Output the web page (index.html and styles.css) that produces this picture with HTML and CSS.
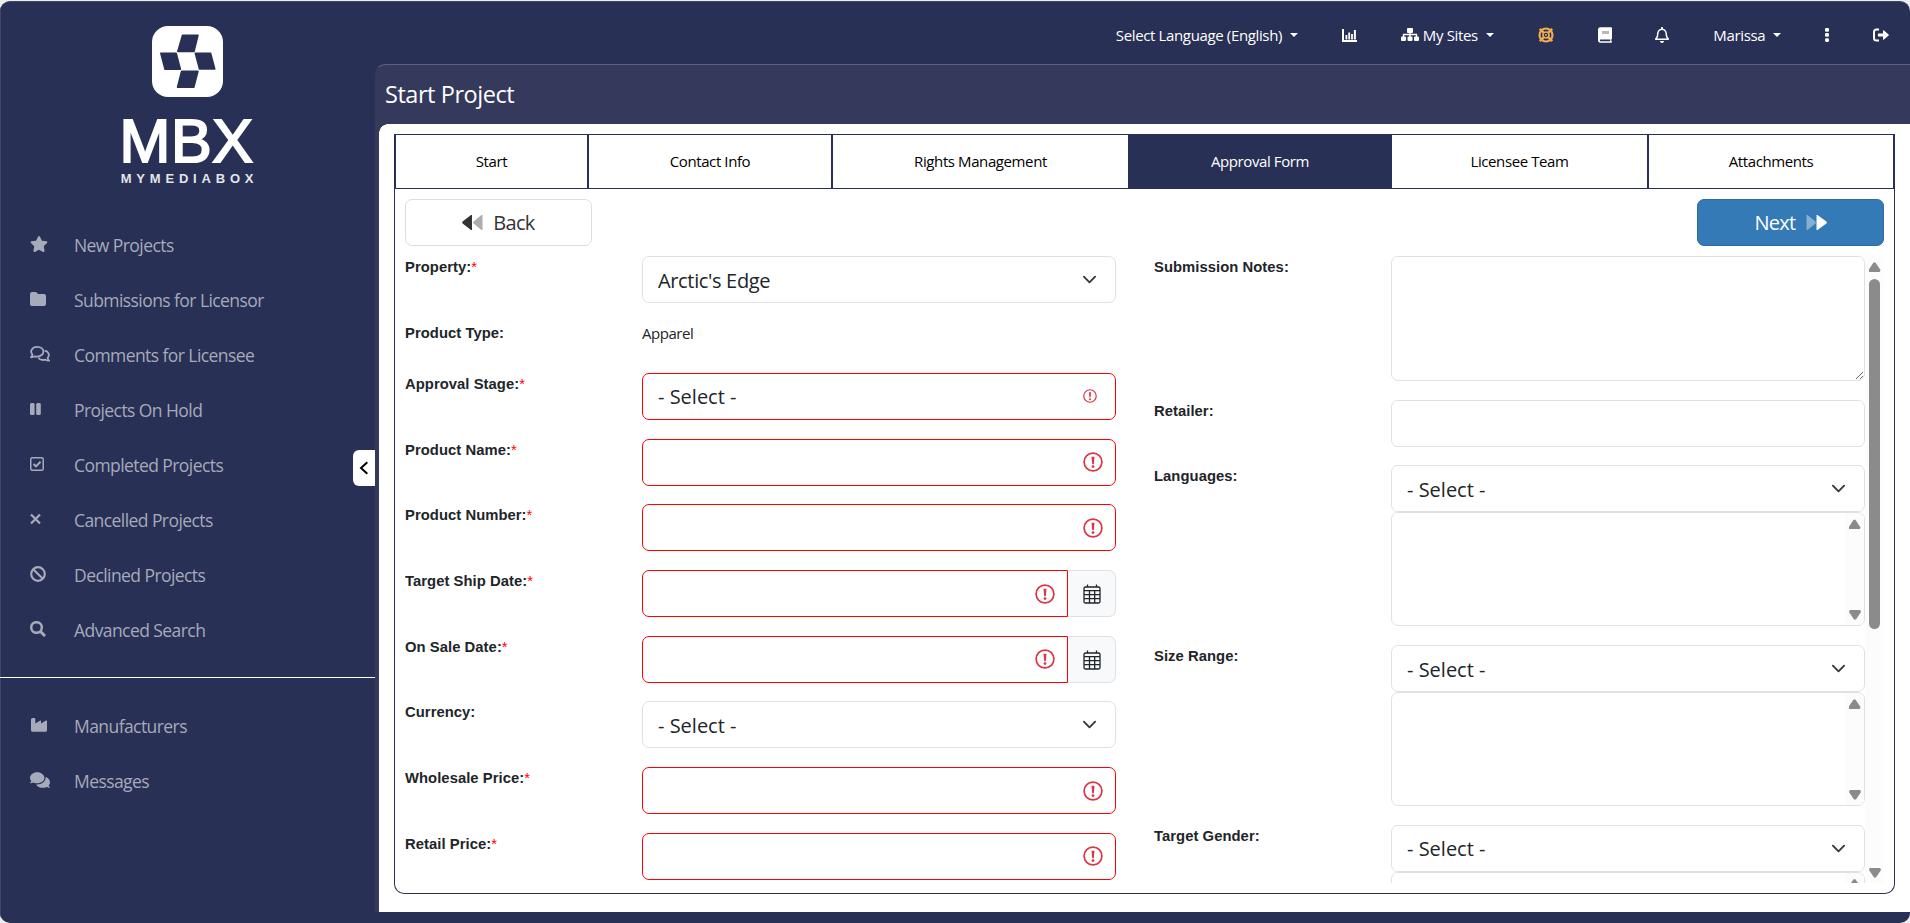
FILE: index.html
```html
<!DOCTYPE html>
<html lang="en">
<head>
    <meta charset="utf-8">
    <title>Start Project - MyMediaBox</title>
    <link rel="stylesheet" href="styles.css">
</head>
<body>
<div class="app">

    <div class="sidebar">
        <div class="logo">
            <svg class="logo-mark" viewBox="0 0 71 71">
                <rect width="71" height="71" rx="16" fill="#fff"/>
                <g fill="#293055" stroke="#293055" stroke-width="1.5" stroke-linejoin="round">
                    <path d="M30.5 9.2H46L42 25.5H25.8z"/>
                    <path d="M8.8 27.3H24.2L28.4 43.3H13z"/>
                    <path d="M43.3 27.3H58.6L62.8 43H47.5z"/>
                    <path d="M29.6 45.2H46L41.8 61.2H25.5z"/>
                </g>
            </svg>
            <div class="logo-name">MBX</div>
            <div class="logo-sub">MYMEDIABOX</div>
        </div>
        <ul class="menu">
            <li><svg width="18" height="16" viewBox="0 0 576 512"><path d="M259.3 17.8L194 150.2 47.9 171.5c-26.2 3.8-36.7 36.1-17.7 54.6l105.7 103-25 145.5c-4.5 26.3 23.2 46 46.4 33.7L288 439.6l130.7 68.7c23.2 12.2 50.9-7.4 46.4-33.7l-25-145.5 105.7-103c19-18.5 8.5-50.8-17.7-54.6L382 150.2 316.7 17.8c-11.7-23.6-45.6-23.9-57.4 0z"/></svg><span>New Projects</span></li>
            <li><svg width="16" height="16" viewBox="0 0 16 16"><path d="M2 1h4l2 2h6q2 0 2 2v8q0 2-2 2H2q-2 0-2-2V3q0-2 2-2z"/></svg><span>Submissions for Licensor</span></li>
            <li><svg width="20" height="16" viewBox="0 0 20 16"><g fill="none" stroke="#a6aaba" stroke-width="1.8" stroke-linejoin="round"><path d="M2.4 8.6C-.6 5 2.4.9 7 .9s6.4 2.6 6.4 4.9S11 10.600 7 10.600q-1.200 0-2.200-.3Q3.200 11.300 1 11.300 2.200 10 2.400 8.600z"/><path d="M14.600 4.600c3.800.6 5.600 4.400 3 7.400q.2 1.600 1.600 2.700-2.400 0-3.900-1-4.800 1.200-6.900-2"/></g></svg><span>Comments for Licensee</span></li>
            <li><svg width="11" height="16" viewBox="0 0 11 16"><rect y="2" width="4.600" height="12" rx="1.500"/><rect x="6.200" y="2" width="4.600" height="12" rx="1.500"/></svg><span>Projects On Hold</span></li>
            <li><svg width="14" height="16" viewBox="0 0 14 16"><g fill="none" stroke="#a6aaba" stroke-width="1.500"><rect x=".8" y="1.800" width="12.400" height="12.400" rx="1.500"/><path stroke-width="2" d="M3.600 8l2.400 2.400 4.500-4.700"/></g></svg><span>Completed Projects</span></li>
            <li><svg width="11" height="16" viewBox="0 0 11 16"><path fill="none" stroke="#a6aaba" stroke-width="2.300" d="M1 3.500l9 9M10 3.500l-9 9"/></svg><span>Cancelled Projects</span></li>
            <li><svg width="16" height="16" viewBox="0 0 16 16"><g fill="none" stroke="#a6aaba" stroke-width="2.200"><circle cx="8" cy="8" r="6.800"/><path d="M3.200 3.200l9.600 9.600"/></g></svg><span>Declined Projects</span></li>
            <li><svg width="16" height="16" viewBox="0 0 16 16"><g fill="none" stroke="#a6aaba"><circle cx="6.500" cy="6.500" r="5.300" stroke-width="2.500"/><path stroke-width="3" d="M10.300 10.300l4.700 4.700"/></g></svg><span>Advanced Search</span></li>
        </ul>
        <ul class="menu menu-bottom">
            <li><svg width="18" height="16" viewBox="0 0 18 16"><path d="M1 2.500Q1 1 2.500 1h1.800Q5.300 1 5.300 2v4.500l5-2.900q.7-.3.700.5v2.400l5-2.900q1-.4 1 .6v9q0 1.500-1.500 1.500h-13Q1 14.700 1 13.200z"/></svg><span>Manufacturers</span></li>
            <li><svg width="20" height="18" viewBox="0 0 576 512"><path d="M416 192c0-88.400-93.100-160-208-160S0 103.600 0 192c0 34.300 14.100 65.900 38 92-13.400 30.200-35.500 54.200-35.800 54.500-2.200 2.300-2.800 5.700-1.500 8.700S4.800 352 8 352c36.600 0 66.900-12.300 88.700-25 32.200 15.700 70.300 25 111.300 25 114.900 0 208-71.600 208-160zm122 220c23.900-26 38-57.700 38-92 0-66.900-53.500-124.200-129.300-148.100.9 6.600 1.300 13.300 1.300 20.100 0 105.900-107.700 192-240 192-10.800 0-21.300-.8-31.700-1.900C207.800 439.600 281.800 480 368 480c41 0 79.100-9.200 111.300-25 21.800 12.700 52.100 25 88.700 25 3.200 0 6.100-1.900 7.300-4.800 1.300-2.900.7-6.300-1.500-8.700-.3-.3-22.400-24.200-35.800-54.500z"/></svg><span>Messages</span></li>
        </ul>
        <div class="collapse">
            <svg width="10" height="14" viewBox="0 0 10 14"><path d="M8.300 1.200L2 7l6.300 5.800" fill="none" stroke="#000" stroke-width="2"/></svg>
        </div>
    </div>

    <div class="main">
        <div class="topbar">
            <div class="top-item">Select Language (English)<i class="caret"></i></div>
            <svg width="15" height="15" viewBox="0 0 15 15"><path d="M1 1v12h14" fill="none" stroke="#fff" stroke-width="2"/><path d="M3.500 7h1.800v4.500H3.500zM6.300 4.500h1.800v7H6.300zM9.100 6h1.800v5.500H9.100zM11.900 2h2v9.500h-2z" fill="#fff"/></svg>
            <div class="top-item sites"><svg width="18" height="15" viewBox="0 0 18 15" fill="#fff"><rect x="6" y="1" width="6" height="5" rx="1"/><rect y="9.500" width="5" height="4.500" rx="1"/><rect x="6.500" y="9.500" width="5" height="4.500" rx="1"/><rect x="13" y="9.500" width="5" height="4.500" rx="1"/><path d="M2.500 10V7.500h13V10M9 5v5" fill="none" stroke="#fff" stroke-width="1.400"/></svg>My Sites<i class="caret"></i></div>
            <svg width="16" height="16" viewBox="0 0 16 16"><g fill="none" stroke="#f0ad4e"><circle cx="8" cy="8" r="6.500" stroke-width="2.200"/><circle cx="8" cy="8" r="3" stroke-width="1.700"/><path stroke-width="2.600" d="M1.800 1.800l3.600 3.600M14.200 1.800l-3.600 3.600M1.800 14.200l3.600-3.600M14.200 14.200l-3.600-3.600"/></g><circle cx="8" cy="8" r="1" fill="#f0ad4e"/></svg>
            <svg width="14" height="16" viewBox="0 0 14 16"><path d="M2.500.3H13q1 0 1 1v10q0 .7-.6 1-.3 1 0 2 .6.200.6.700 0 .7-.8.700H2.500Q0 15.700 0 13V2.800Q0 .3 2.500.3z" fill="#fff"/><path d="M4 4h7v3H4z" fill="#b6b6cb"/><path d="M2.600 12.600h9.600v1.600H2.600q-.8 0-.8-.8t.8-.8z" fill="#293055"/></svg>
            <svg width="14" height="16" viewBox="0 0 448 512"><path fill="#fff" d="M439.390 362.290c-19.320-20.760-55.470-51.990-55.470-154.290 0-77.700-54.480-139.900-127.940-155.160V32c0-17.670-14.320-32-31.980-32s-31.980 14.330-31.980 32v20.840C118.560 68.100 64.080 130.300 64.080 208c0 102.300-36.150 133.530-55.470 154.290-6 6.450-8.660 14.160-8.610 21.710.11 16.400 12.980 32 32.100 32h383.800c19.120 0 32-15.600 32.100-32 .05-7.550-2.610-15.270-8.610-21.710zM67.530 368c21.220-27.970 44.420-74.330 44.530-159.420 0-.2-.06-.38-.06-.58 0-61.860 50.140-112 112-112s112 50.140 112 112c0 .2-.06.38-.06.58.11 85.100 23.310 131.460 44.530 159.420H67.530zM224 512c35.320 0 63.970-28.650 63.970-64H160.030c0 35.350 28.650 64 63.970 64z"/></svg>
            <div class="top-item">Marissa<i class="caret"></i></div>
            <svg width="4" height="14" viewBox="0 0 4 14" fill="#fff"><rect width="4" height="3.700" rx="1.300"/><rect y="5.100" width="4" height="3.700" rx="1.300"/><rect y="10.200" width="4" height="3.700" rx="1.300"/></svg>
            <svg width="16" height="16" viewBox="0 0 16 16"><path d="M6 2.500H3.500Q1 2.500 1 5v6q0 2.500 2.500 2.500H6" fill="none" stroke="#fff" stroke-width="2"/><path d="M5.500 6.500H10V4q0-1.300 1-.4l4.600 3.900q.5.500 0 1L11 12.400q-1 .9-1-.4V9.500H5.500q-.6 0-.6-.6V7.100q0-.6.600-.6z" fill="#fff"/></svg>
        </div>
        <div class="title-bar">Start Project</div>

        <div class="content">
            <div class="panel">
                <div class="tabs">
                    <div class="tab tab-start">Start</div>
                    <div class="tab tab-contact">Contact Info</div>
                    <div class="tab tab-rights">Rights Management</div>
                    <div class="tab tab-approval active">Approval Form</div>
                    <div class="tab tab-team">Licensee Team</div>
                    <div class="tab tab-attach">Attachments</div>
                </div>
                <div class="panel-body">
                    <div class="buttons">
                        <button class="btn btn-back"><svg width="21" height="15" viewBox="0 0 21 15"><path d="M10 0v15q-.7.300-1.300-.2L.6 8.400q-.8-.9 0-1.800L8.700.2Q9.300-.3 10 0z" fill="#333"/><path d="M20.500 0v15q-.7.300-1.300-.2l-7.600-6.400q-.8-.9 0-1.800L19.200.2q.6-.5 1.300-.2z" fill="#adadad"/></svg>Back</button>
                        <button class="btn btn-next">Next<svg width="21" height="15" viewBox="0 0 21 15"><path d="M.5 0v15q.7.300 1.300-.2l7.600-6.400q.8-.9 0-1.800L1.800.2Q1.200-.3.5 0z" fill="#85afd4"/><path d="M10.500 0v15q.7.300 1.300-.2l8.600-6.400q.8-.9 0-1.800L11.800.2q-.6-.5-1.300-.2z" fill="#fff"/></svg></button>
                    </div>
                    <div class="scroll-area">
                        <div class="form">
                            <div class="col">
                                <div class="row"><label>Property:<em>*</em></label><select class="field property"><option>Arctic's Edge</option></select></div>
                                <div class="row row-text"><label>Product Type:</label><div class="plain">Apparel</div></div>
                                <div class="row"><label>Approval Stage:<em>*</em></label><select class="field invalid"><option>- Select -</option></select></div>
                                <div class="row"><label>Product Name:<em>*</em></label><input type="text" class="field invalid"></div>
                                <div class="row"><label>Product Number:<em>*</em></label><input type="text" class="field invalid"></div>
                                <div class="row"><label>Target Ship Date:<em>*</em></label><div class="date"><input type="text" class="field invalid"><span class="cal"><svg width="18" height="20" viewBox="0 0 18 20"><path d="M2.500 3h13q1.500 0 1.500 1.500v13q0 1.500-1.500 1.500h-13Q1 19 1 17.500v-13Q1 3 2.500 3zM4.500.5V3M13.500.5V3M1 6.700h16M1 10.700h16M1 14.700h16M6.500 6.700V19M11.700 6.700V19" fill="none" stroke="#212529" stroke-width="1.300"/></svg></span></div></div>
                                <div class="row"><label>On Sale Date:<em>*</em></label><div class="date"><input type="text" class="field invalid"><span class="cal"><svg width="18" height="20" viewBox="0 0 18 20"><path d="M2.500 3h13q1.500 0 1.500 1.500v13q0 1.500-1.500 1.500h-13Q1 19 1 17.500v-13Q1 3 2.500 3zM4.500.5V3M13.500.5V3M1 6.700h16M1 10.700h16M1 14.700h16M6.500 6.700V19M11.700 6.700V19" fill="none" stroke="#212529" stroke-width="1.300"/></svg></span></div></div>
                                <div class="row"><label>Currency:</label><select class="field"><option>- Select -</option></select></div>
                                <div class="row"><label>Wholesale Price:<em>*</em></label><input type="text" class="field invalid"></div>
                                <div class="row"><label>Retail Price:<em>*</em></label><input type="text" class="field invalid"></div>
                            </div>
                            <div class="col">
                                <div class="row"><label>Submission Notes:</label><textarea class="field notes"></textarea></div>
                                <div class="row"><label>Retailer:</label><input type="text" class="field"></div>
                                <div class="row"><label>Languages:</label>
                                    <div class="multi"><select class="field"><option>- Select -</option></select><div class="list"><div class="bar"><i class="up"></i><i class="down"></i></div></div></div>
                                </div>
                                <div class="row"><label>Size Range:</label>
                                    <div class="multi"><select class="field"><option>- Select -</option></select><div class="list"><div class="bar"><i class="up"></i><i class="down"></i></div></div></div>
                                </div>
                                <div class="row"><label>Target Gender:</label>
                                    <div class="multi"><select class="field"><option>- Select -</option></select><div class="list"><div class="bar"><i class="up"></i><i class="down"></i></div></div></div>
                                </div>
                            </div>
                        </div>
                        <div class="bar main-bar"><i class="up"></i><div class="thumb"></div><i class="down"></i></div>
                    </div>
                </div>
            </div>
        </div>
    </div>

</div>
</body>
</html>
```

FILE: styles.css
```css
* {
    box-sizing: border-box;
}
body {
    margin: 0;
    padding-top: 1px;
    height: 923px;
    overflow: hidden;
    background: #eceeec;
    font-family: "Segoe UI", "Open Sans", "Noto Sans", sans-serif;
    color: #212529;
}
svg {
    display: block;
    flex: none;
}
.app {
    display: flex;
    height: 922px;
    background: #293055;
    border-radius: 10px;
    border-top: 1px solid #3f4667;
    overflow: hidden;
}

/* sidebar */
.sidebar {
    position: relative;
    width: 375px;
    border-left: 1px solid #3f4667;
    flex: none;
}
.logo {
    height: 215px;
    padding: 24px 2px 0 0;
    display: flex;
    flex-direction: column;
    align-items: center;
    color: #fff;
    font-family: "Liberation Sans", Arial, sans-serif;
}
.logo-mark {
    width: 71px;
    height: 71px;
}
.logo-name {
    margin-top: 14px;
    padding-right: 1px;
    font-size: 61px;
    line-height: 60px;
    letter-spacing: 0.6px;
    -webkit-text-stroke: 2px #fff;
}
.logo-sub {
    margin-top: 1px;
    padding-left: 5px;
    font-size: 13px;
    line-height: 14px;
    font-weight: bold;
    letter-spacing: 4.8px;
    color: #e3e4ea;
}
.menu {
    list-style: none;
    margin: 0;
    padding: 0 0 20px;
}
.menu li {
    display: flex;
    align-items: center;
    height: 55px;
    padding-left: 28.5px;
    font-size: 17.5px;
    letter-spacing: -0.57px;
    color: #a6aaba;
    fill: #a6aaba;
}
.menu li svg {
    margin-top: -2px;
}
.menu li span {
    position: absolute;
    left: 73px;
}
.menu-bottom {
    margin-left: -1px;
    border-top: 1px solid #fff;
    padding: 20px 0 0 1px;
}
.collapse {
    position: absolute;
    right: 0;
    top: 448px;
    width: 22px;
    height: 36px;
    padding: 11px 0 0 6px;
    background: #fff;
    border-radius: 6px 0 0 6px;
}

/* header */
.main {
    flex: 1;
    display: flex;
    flex-direction: column;
}
.topbar {
    height: 62px;
    display: flex;
    align-items: center;
    justify-content: flex-end;
    gap: 43.9px;
    padding: 4px 21px 0 0;
    color: #fff;
    font-size: 15px;
    letter-spacing: -0.36px;
}
.top-item {
    display: flex;
    align-items: center;
    height: 22px;
    margin-top: -1px;
}
.sites svg {
    margin-right: 4px;
}
.caret {
    margin-left: 8px;
    border: 4px solid transparent;
    border-top-color: #fff;
    border-bottom: 0;
}
.title-bar {
    height: 70px;
    margin-bottom: -10px;
    padding: 12px 0 0 9px;
    background: #353a5d;
    border-top: 1px solid #5c617e;
    border-left: 1px solid #353a5d;
    border-radius: 10px 0 0 0;
    color: #fff;
    font-size: 23.5px;
    line-height: 34px;
    letter-spacing: -0.45px;
}
.content {
    position: relative;
    height: 788px;
    padding: 10px 15px 18px;
    border-left: 4px solid #353a5d;
    background: #fff;
    background-clip: padding-box;
}
.content::before {
    content: "";
    position: absolute;
    left: 0;
    top: 0;
    width: 9px;
    height: 9px;
    background: radial-gradient(circle at 9px 9px, #fff 8.5px, #353a5d 9px);
}

/* panel and tabs */
.panel {
    height: 760px;
    border: 1px solid #293055;
    border-top: 0;
    border-radius: 0 0 10px 10px;
}
.tabs {
    display: flex;
    height: 55px;
}
.tab {
    border: 1px solid #293055;
    color: #000;
    font-size: 15px;
    line-height: 52px;
    letter-spacing: -0.4px;
    text-align: center;
}
.tab.active {
    background: #293055;
    color: #fff;
}
.tab-start { width: 193px; }
.tab-contact { width: 244px; }
.tab-rights { width: 297px; }
.tab-approval { width: 262px; }
.tab-team { width: 257px; }
.tab-attach { flex: 1; }
.panel-body {
    padding: 10px;
}
.buttons {
    display: flex;
    justify-content: space-between;
    margin-bottom: 10px;
}
.btn {
    display: flex;
    align-items: center;
    justify-content: center;
    gap: 10px;
    width: 187px;
    height: 47px;
    border: 1px solid #ddd;
    border-radius: 7px;
    background: #fff;
    color: #333;
    font-family: inherit;
    font-size: 20px;
    letter-spacing: -0.7px;
}
.btn-next {
    background: #337ab7;
    border-color: #2e6da4;
    color: #fff;
}

/* form */
.scroll-area {
    display: flex;
    height: 627px;
    overflow: hidden;
}
.form {
    display: flex;
    justify-content: space-between;
    width: 1460px;
}
.col {
    width: 711px;
}
.row {
    display: flex;
    justify-content: space-between;
    margin-bottom: 18.7px;
}
.row-text {
    height: 51.3px;
    margin: 0;
    padding-top: 0.3px;
}
.row label {
    padding-top: 2px;
    font: bold 14.8px/18px "Liberation Sans", Arial, sans-serif;
    letter-spacing: 0.05px;
}
.row em {
    color: #f00;
    font-style: normal;
    font-weight: normal;
}
.plain {
    width: 474px;
    font-size: 15px;
    line-height: 23px;
    letter-spacing: -0.45px;
}
.field {
    display: block;
    appearance: none;
    width: 474px;
    height: 47px;
    margin: 0;
    padding: 1px 15px 0;
    border: 1px solid #dee2e6;
    border-radius: 7px;
    background: #fff no-repeat;
    color: #212529;
    font-family: inherit;
    font-size: 20px;
    letter-spacing: 0;
}
select.field {
    background-image: url("data:image/svg+xml,%3Csvg xmlns='http://www.w3.org/2000/svg' viewBox='0 0 16 16'%3E%3Cpath fill='none' stroke='%23343a40' stroke-linecap='round' stroke-linejoin='round' stroke-width='2' d='m2 5 6 6 6-6'/%3E%3C/svg%3E");
    background-position: right 18px center;
    background-size: 15px 15px;
}
select.property {
    letter-spacing: -0.35px;
}
.field.invalid {
    border-color: #f00;
    background-image: url("data:image/svg+xml,%3Csvg xmlns='http://www.w3.org/2000/svg' viewBox='0 0 20 20'%3E%3Ccircle cx='10' cy='10' r='8.9' fill='none' stroke='%23dc3545' stroke-width='1.7'/%3E%3Cpath fill='%23dc3545' d='M8.5 4.800h3l-.7 7.500H9.200z'/%3E%3Ccircle cx='10' cy='14.600' r='1.400' fill='%23dc3545'/%3E%3C/svg%3E");
    background-position: right 12px center;
    background-size: 20px 20px;
}
select.field.invalid {
    background-position: right 18px center;
    background-size: 14px 14px;
}
.date {
    display: flex;
    width: 474px;
}
.date .field {
    width: 426px;
    border-radius: 7px 0 0 7px;
}
.cal {
    width: 48px;
    height: 47px;
    padding: 13px 0 0 15px;
    background: #f8f9fa;
    border: 1px solid #dee2e6;
    border-left: 0;
    border-radius: 0 7px 7px 0;
}
.notes.field {
    height: 125px;
    resize: both;
}
.list {
    display: flex;
    justify-content: flex-end;
    height: 114px;
    border: 1px solid #dee2e6;
    border-radius: 7px;
    overflow: hidden;
}

/* scrollbars */
.bar {
    display: flex;
    flex-direction: column;
    align-items: center;
    justify-content: space-between;
    width: 19px;
    padding: 6px 0 5px;
    background: #fcfcfc;
}
.up,
.down {
    width: 12px;
    height: 10px;
    background: #8b8b8b;
    clip-path: polygon(42% 4%, 58% 4%, 100% 80%, 94% 100%, 6% 100%, 0 80%);
}
.down {
    transform: rotate(180deg);
}
.thumb {
    width: 11px;
    height: 350px;
    margin: 7px 0 auto;
    border-radius: 6px;
    background: #8b8b8b;
}
```
